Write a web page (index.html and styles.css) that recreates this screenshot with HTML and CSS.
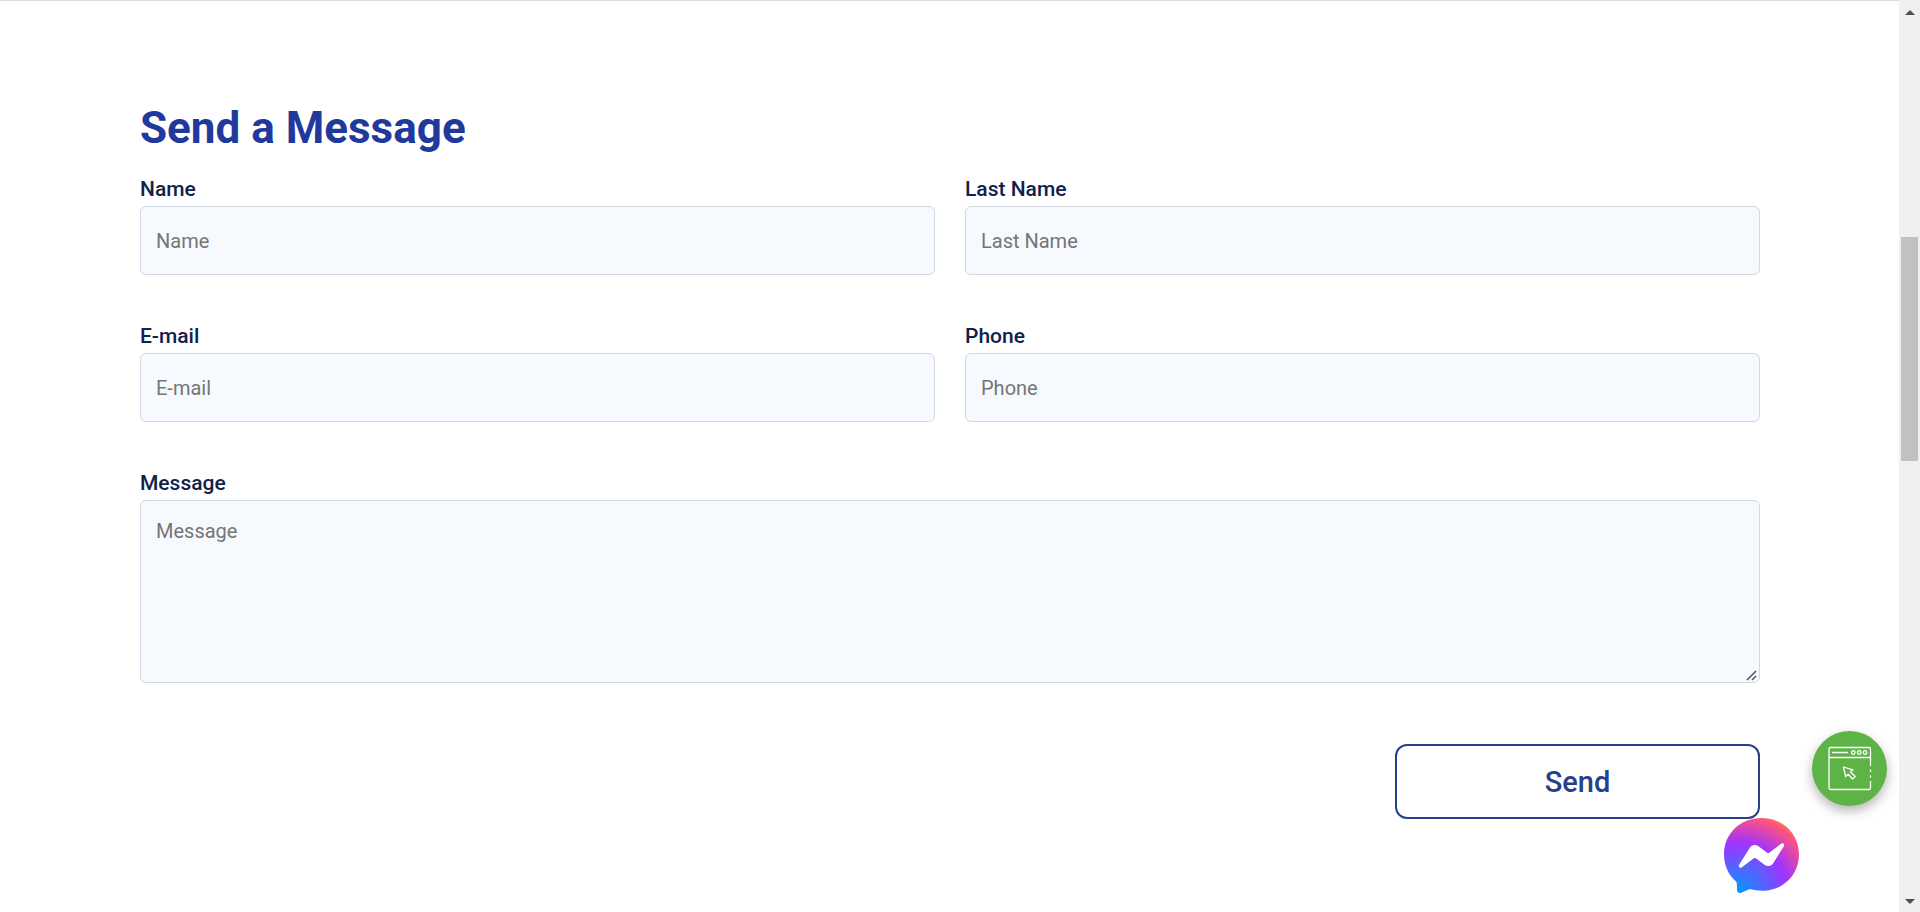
FILE: index.html
```html
<!DOCTYPE html>
<html lang="en">
<head>
  <meta charset="UTF-8" />
  <meta name="viewport" content="width=device-width, initial-scale=1.0"/>
  <title>Send a Message</title>
  <link rel="stylesheet" href="styles.css">
</head>
<body>

<main class="contact">
  <form class="contact-form">
    <h2>Send a Message</h2>
    <div class="fields">
      <div class="field">
        <label for="name">Name</label>
        <input type="text" id="name" name="name" placeholder="Name">
      </div>
      <div class="field">
        <label for="lastname">Last Name</label>
        <input type="text" id="lastname" name="lastname" placeholder="Last Name">
      </div>
      <div class="field">
        <label for="email">E-mail</label>
        <input type="email" id="email" name="email" placeholder="E-mail">
      </div>
      <div class="field">
        <label for="phone">Phone</label>
        <input type="tel" id="phone" name="phone" placeholder="Phone">
      </div>
      <div class="field full">
        <label for="message">Message</label>
        <textarea id="message" name="message" placeholder="Message"></textarea>
      </div>
    </div>
    <button type="submit" class="send">Send</button>
  </form>
</main>

<div class="scrollbar" aria-hidden="true">
  <span class="arrow up"></span>
  <span class="thumb"></span>
  <span class="arrow down"></span>
</div>

<!-- floating buttons -->
<button type="button" class="float site-btn" aria-label="Open website">
  <svg viewBox="0 0 75 75" fill="none" stroke="#fff" stroke-width="1.3" stroke-linejoin="round">
    <path d="M58.5 35V18q0-1.500-1.500-1.500H18.500q-1.500 0-1.500 1.500V57q0 1.500 1.500 1.500H57q1.500 0 1.500-1.500V50"/>
    <path d="M17 26.500H58.500M20 21.500H36M58.500 38.500V41M58.500 44.500V46.500"/>
    <circle cx="41.300" cy="21.500" r="1.800"/>
    <circle cx="47.200" cy="21.500" r="1.800"/>
    <circle cx="53" cy="21.500" r="1.800"/>
    <path d="M31.500 36L41 38.800L38.500 41L43.300 45.400L40.600 48L36.200 43.300L33.600 45.600Z"/>
  </svg>
</button>
<button type="button" class="float messenger-btn" aria-label="Chat on Messenger">
  <svg viewBox="0 0 800 800">
    <defs>
      <radialGradient id="messenger" cx="19.25%" cy="99.5%" r="108.96%">
        <stop offset="0" stop-color="#09f"/>
        <stop offset=".61" stop-color="#a033ff"/>
        <stop offset=".935" stop-color="#ff5280"/>
        <stop offset="1" stop-color="#ff7061"/>
      </radialGradient>
    </defs>
    <path fill="url(#messenger)" d="M400 0C174.700 0 0 165.100 0 388c0 116.600 47.800 217.400 125.600 287 6.500 5.800 10.500 14 10.700 22.800l2.200 71.200a32 32 0 0 0 44.900 28.300l79.400-35c6.700-3 14.300-3.500 21.400-1.600 36.500 10 75.300 15.400 115.800 15.400 225.300 0 400-165.100 400-388S625.300 0 400 0z"/>
    <path fill="#fff" d="M159.800 501.500l117.500-186.400a60 60 0 0 1 86.800-16l93.500 70.100a24 24 0 0 0 28.900-.1l126.200-95.800c16.800-12.800 38.800 7.400 27.600 25.300L522.700 484.900a60 60 0 0 1-86.800 16l-93.500-70.100a24 24 0 0 0-28.900.1l-126.200 95.800c-16.800 12.800-38.800-7.300-27.500-25.200z"/>
  </svg>
</button>

</body>
</html>
```
FILE: styles.css
```css
* {
  box-sizing: border-box;
}

body {
  margin: 0;
  min-height: 100vh;
  display: flex;
  background: #fff;
  font-family: Roboto, sans-serif;
  color: #10214b;
}

.contact {
  flex: 1;
  padding: 100px 139px 90px 140px;
  border-top: 1px solid #dcdcdc;
}

h2 {
  margin: 0 0 21px;
  font-size: 44px;
  line-height: 54px;
  font-weight: 700;
  color: #1f3a9c;
}

.fields {
  display: grid;
  grid-template-columns: 1fr 1fr;
  gap: 48px 30px;
}

.field {
  display: flex;
  flex-direction: column;
}

.full {
  grid-column: span 2;
}

label {
  margin-bottom: 4px;
  font-size: 21px;
  line-height: 26px;
  font-weight: 500;
}

input,
textarea {
  width: 100%;
  height: 69px;
  padding: 15px;
  font-family: inherit;
  font-size: 20px;
  line-height: 30px;
  color: #10214b;
  background: #f6f9fe;
  border: 1px solid #d3d8e0;
  border-radius: 6px;
}

textarea {
  height: 183px;
}

textarea::-webkit-resizer {
  background: url("data:image/svg+xml,%3Csvg xmlns='http://www.w3.org/2000/svg' width='15' height='15' stroke='%23505060' stroke-width='1.5'%3E%3Cpath d='M3 13L12 4M8 13L12 9'/%3E%3C/svg%3E") no-repeat right bottom;
}

::placeholder {
  color: #757575;
}

.send {
  display: block;
  width: 365px;
  height: 75px;
  margin: 61px 0 0 auto;
  font-family: inherit;
  font-size: 29px;
  font-weight: 500;
  color: #27408b;
  background: #fff;
  border: 2px solid #27408b;
  border-radius: 12px;
  cursor: pointer;
}

.scrollbar {
  width: 21px;
  height: 100vh;
  padding: 10px 2px 8px;
  display: flex;
  flex-direction: column;
  align-items: center;
  background: #f0f0f0;
}

.arrow {
  border: 5px solid transparent;
}

.up {
  border-top: 0;
  border-bottom-color: #505050;
}

.down {
  margin-top: auto;
  border-bottom: 0;
  border-top-color: #505050;
}

.thumb {
  width: 17px;
  height: 224px;
  margin-top: 222px;
  background: #c1c1c1;
}

.float {
  position: fixed;
  width: 75px;
  height: 75px;
  padding: 0;
  border: none;
  border-radius: 50%;
  background: none;
  cursor: pointer;
}

.float svg {
  display: block;
  width: 100%;
  height: 100%;
}

.site-btn {
  right: 33px;
  bottom: 106px;
  background: #5eb346;
  box-shadow: 0 5px 12px rgba(0, 0, 0, 0.3);
}

.messenger-btn {
  right: 121px;
  bottom: 19px;
  border-radius: 0;
}
```
